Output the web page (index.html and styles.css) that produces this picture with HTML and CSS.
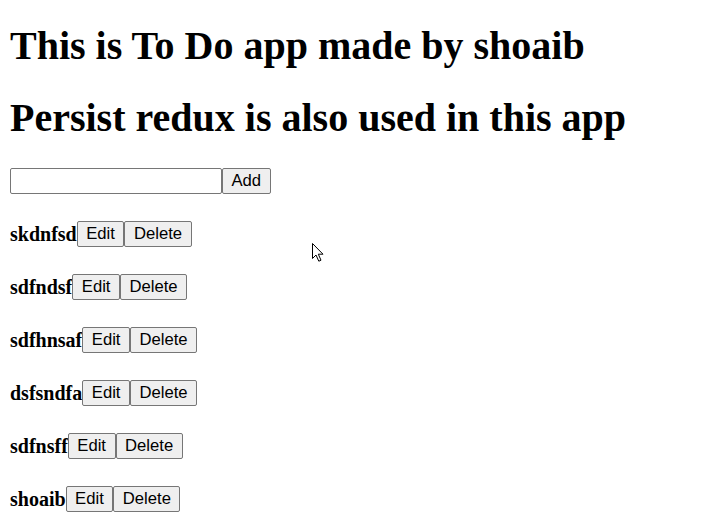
FILE: index.html
```html
<!DOCTYPE html>
<html>
<head>
<meta charset="utf-8">
<link rel="stylesheet" href="styles.css">
</head>
<body class="page">
<h1 class="title">This is To Do app made by shoaib</h1>
<h1 class="title">Persist redux is also used in this app</h1>
<div class="add-row"><input class="field" type="text"><button class="btn">Add</button></div>
<h4 class="item">skdnfsd<button class="btn">Edit</button><button class="btn">Delete</button></h4>
<h4 class="item">sdfndsf<button class="btn">Edit</button><button class="btn">Delete</button></h4>
<h4 class="item">sdfhnsaf<button class="btn">Edit</button><button class="btn">Delete</button></h4>
<h4 class="item">dsfsndfa<button class="btn">Edit</button><button class="btn">Delete</button></h4>
<h4 class="item">sdfnsff<button class="btn">Edit</button><button class="btn">Delete</button></h4>
<h4 class="item">shoaib<button class="btn">Edit</button><button class="btn">Delete</button></h4>
<svg class="cursor" width="13" height="20" viewBox="0 0 13 20"><path d="M0.5 0.5 L0.5 15.5 L4 12 L6.8 18.2 L9 17.2 L6.3 11.2 L11 11.2 Z" fill="#fff" stroke="#000" stroke-width="1" stroke-linejoin="miter"/></svg>
</body>
</html>
```
FILE: styles.css
```css
html, body { background: #fff; }
.page {
  margin: 0;
  padding: 1px 10px 0;
  font-family: "Liberation Serif", "Times New Roman", serif;
  font-size: 20px;
  color: #000;
}
.title {
  font-size: 40px;
  font-weight: bold;
  margin: 26.8px 0;
  line-height: 46px;
}
.title:first-child {
  margin-top: 21.5px;
}
.add-row {
  display: flex;
  align-items: center;
  height: 26px;
  margin-top: 2.5px;
}
.field {
  box-sizing: border-box;
  width: 212px;
  height: 26px;
  margin: 0;
  padding: 1px 2px;
  border: 1px solid #767676;
  border-radius: 2px;
  font-family: "Liberation Sans", Arial, sans-serif;
  font-size: 16.67px;
  background: #fff;
}
.btn {
  box-sizing: border-box;
  height: 26px;
  margin: 0;
  padding: 0 8.5px;
  border: 1px solid #767676;
  border-radius: 2px;
  background: #efefef;
  color: #000;
  font-family: "Liberation Sans", Arial, sans-serif;
  font-size: 16.67px;
  line-height: 24px;
}
.item {
  display: flex;
  align-items: center;
  height: 26px;
  font-size: 20px;
  font-weight: bold;
  margin: 27px 0;
  line-height: 23px;
}
.cursor {
  position: absolute;
  left: 312px;
  top: 243px;
}
```
